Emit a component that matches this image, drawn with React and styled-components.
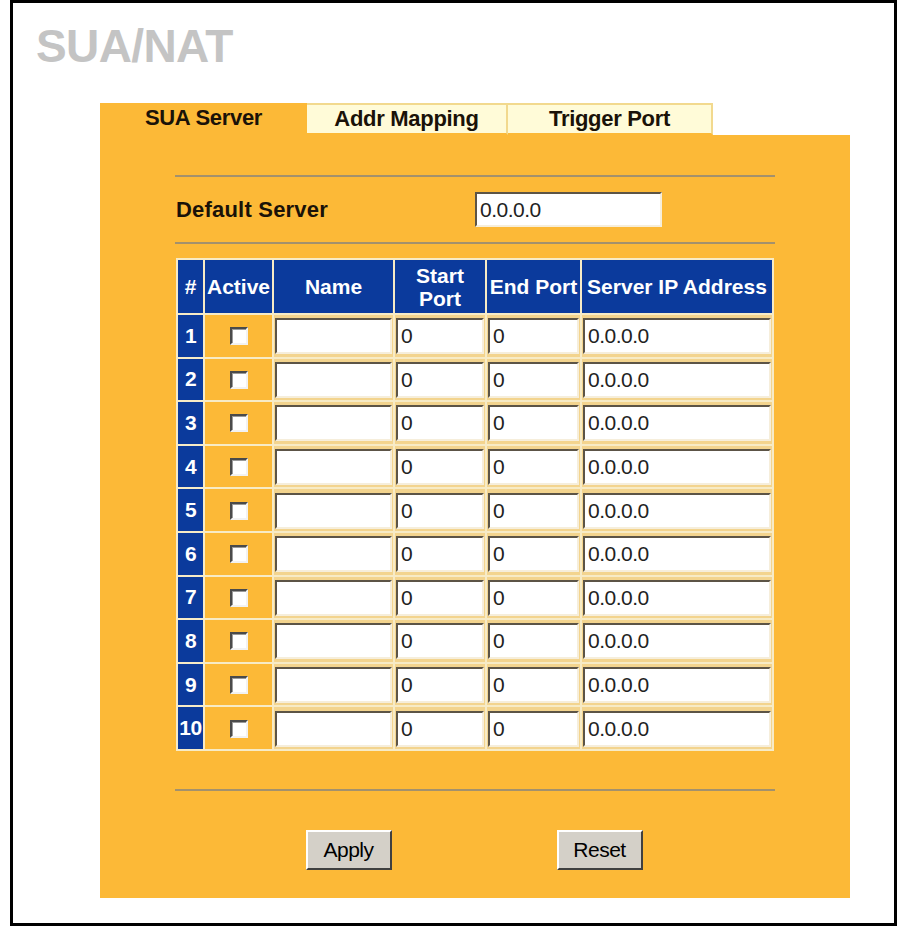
import styled, { createGlobalStyle } from 'styled-components';

const GlobalStyle = createGlobalStyle`
  html, body {
    margin: 0;
    padding: 0;
    background: #ffffff;
    font-family: "Liberation Sans", Arial, sans-serif;
  }
`;

const ORANGE = '#fcb937';
const BLUE = '#0b3a9c';

const Frame = styled.div`
  margin-left: 10px;
  width: 887px;
  height: 926px;
  box-sizing: border-box;
  border: 3px solid #000;
  padding: 21px 0 0 87px;
`;

const Title = styled.h1`
  margin: 0 0 34px -64px;
  font-size: 46px;
  line-height: 45px;
  font-weight: bold;
  color: #c4c4c4;
  letter-spacing: -0.6px;
`;

const Panel = styled.div`
  width: 750px;
`;

const TabRow = styled.div`
  display: flex;
  height: 32px;
`;

const Tab = styled.div`
  box-sizing: border-box;
  width: ${(p) => p.$width}px;
  display: flex;
  align-items: center;
  justify-content: center;
  font-size: 22px;
  font-weight: bold;
  letter-spacing: -0.3px;
  color: #1a1208;
  background: ${(p) => (p.$active ? ORANGE : '#fffbd8')};
  border: ${(p) => (p.$active ? 'none' : '2px solid #f2d98e')};
  border-bottom: ${(p) => (p.$active ? 'none' : `2px solid ${ORANGE}`)};
  border-left: none;
  padding-bottom: ${(p) => (p.$active ? '3px' : '0')};
`;

const Body = styled.div`
  background: ${ORANGE};
  padding: 40px 75px 28px;
`;

const Rule = styled.div`
  height: 2px;
  background: #a3916c;
  margin-top: ${(p) => p.$top || 0}px;
`;

const ServerRow = styled.div`
  display: grid;
  grid-template-columns: 300px 187px;
  align-items: center;
  height: 65px;
`;

const Label = styled.span`
  padding-left: 1px;
  font-size: 22px;
  font-weight: bold;
  letter-spacing: 0.2px;
  color: #1a1208;
`;

const Field = styled.input`
  box-sizing: border-box;
  width: 100%;
  height: ${(p) => p.$height || 35}px;
  margin: 0;
  padding: 0 0 0 3px;
  border: 2px solid;
  border-color: #5c5446 #f6eedb #f6eedb #5c5446;
  background: #ffffff;
  font-family: "Liberation Sans", Arial, sans-serif;
  font-size: 21px;
  letter-spacing: -0.5px;
  color: #222;
  outline: none;
`;

const Table = styled.table`
  margin: 14px auto 0;
  width: 598px;
  border-collapse: separate;
  border-spacing: 2px;
  background: #f7ebc6;
`;

const HeadCell = styled.th`
  height: 53px;
  padding: 0;
  background: ${BLUE};
  color: #fff;
  font-size: 21px;
  font-weight: bold;
  line-height: 23px;
  text-align: center;
  white-space: ${(p) => (p.$wrap ? 'normal' : 'nowrap')};
  width: ${(p) => p.$width}px;
`;

const NumCell = styled.td`
  height: 41.6px;
  padding: 0;
  background: ${BLUE};
  color: #fff;
  font-size: 21px;
  font-weight: bold;
  text-align: center;
  letter-spacing: -0.5px;
`;

const CheckCell = styled.td`
  padding: 0;
  background: ${ORANGE};
  text-align: center;
  vertical-align: middle;
`;

const Check = styled.span`
  display: inline-block;
  width: 18px;
  height: 18px;
  box-sizing: border-box;
  vertical-align: middle;
  background: #fff;
  border: 2px solid;
  border-color: #4a4a4a #f2f2f2 #f2f2f2 #4a4a4a;
  box-shadow: inset 1px 1px 0 #9a9a9a;
`;

const FieldCell = styled.td`
  padding: 2px 1px 1px 1px;
  background: #f3d48e;
`;

const Buttons = styled.div`
  display: flex;
  justify-content: center;
  gap: 165px;
  margin-top: 39px;
  padding-right: 2px;
`;

const Button = styled.button`
  width: 86px;
  height: 40px;
  box-sizing: border-box;
  border: 2px solid;
  border-color: #ffffff #404040 #404040 #ffffff;
  background: #d4d0c8;
  font-family: "Liberation Sans", Arial, sans-serif;
  font-size: 21px;
  letter-spacing: -0.5px;
  color: #000;
  padding: 0;
`;

const rows = Array.from({ length: 10 }, (_, i) => i + 1);

export default function App() {
  return (
    <>
      <GlobalStyle />
      <Frame>
        <Title>SUA/NAT</Title>
        <Panel>
          <TabRow>
            <Tab $active $width={207}>SUA Server</Tab>
            <Tab $width={201}>Addr Mapping</Tab>
            <Tab $width={205}>Trigger Port</Tab>
          </TabRow>
          <Body>
            <Rule />
            <ServerRow>
              <Label>Default Server</Label>
              <Field defaultValue="0.0.0.0" />
            </ServerRow>
            <Rule />
            <Table>
              <thead>
                <tr>
                  <HeadCell $width={25}>#</HeadCell>
                  <HeadCell $width={67}>Active</HeadCell>
                  <HeadCell $width={119}>Name</HeadCell>
                  <HeadCell $width={90} $wrap>Start Port</HeadCell>
                  <HeadCell $width={93}>End Port</HeadCell>
                  <HeadCell $width={190}>Server IP Address</HeadCell>
                </tr>
              </thead>
              <tbody>
                {rows.map((n) => (
                  <tr key={n}>
                    <NumCell>{n}</NumCell>
                    <CheckCell><Check /></CheckCell>
                    <FieldCell><Field $height={36} defaultValue="" /></FieldCell>
                    <FieldCell><Field $height={36} defaultValue="0" /></FieldCell>
                    <FieldCell><Field $height={36} defaultValue="0" /></FieldCell>
                    <FieldCell><Field $height={36} defaultValue="0.0.0.0" /></FieldCell>
                  </tr>
                ))}
              </tbody>
            </Table>
            <Rule $top={38} />
            <Buttons>
              <Button>Apply</Button>
              <Button>Reset</Button>
            </Buttons>
          </Body>
        </Panel>
      </Frame>
    </>
  );
}
